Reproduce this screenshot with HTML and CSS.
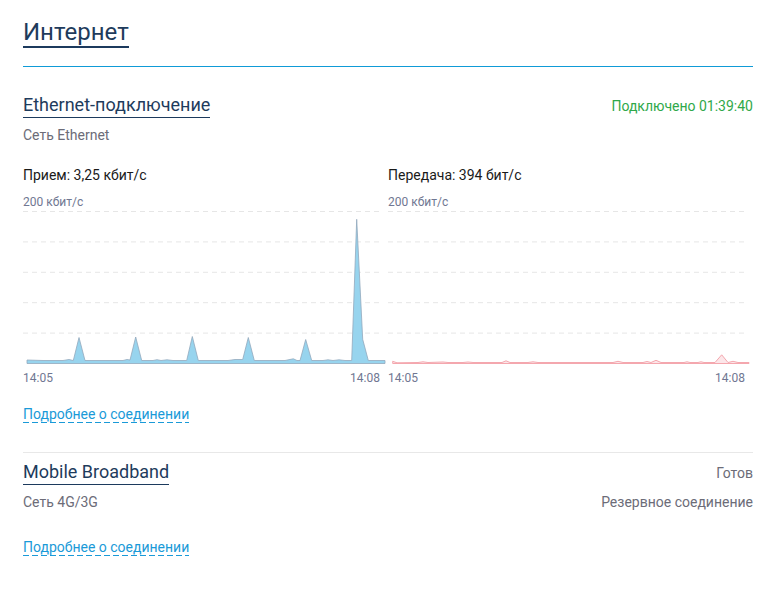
FILE: index.html
```html
<!DOCTYPE html>
<html lang="ru">
<head>
    <meta charset="UTF-8">
    <meta name="viewport" content="width=device-width, initial-scale=1.0">
    <title>Интернет</title>
    <link rel="stylesheet" href="styles.css">
</head>
<body>
    <div class="page-header">
        <h1 class="page-title">Интернет</h1>
    </div>

    <div class="connection">
        <div class="connection-head">
            <h2 class="connection-title">Ethernet-подключение</h2>
            <span class="status status-ok">Подключено 01:39:40</span>
        </div>
        <div class="connection-sub">
            <span>Сеть Ethernet</span>
        </div>

        <div class="charts">
            <div class="chart">
                <div class="chart-caption">Прием: 3,25 кбит/с</div>
                <div class="chart-scale">200 кбит/с</div>
                <svg class="chart-area" width="357" height="156" viewBox="0 0 357 156">
                    <g class="grid">
                        <line x1="0" y1="2.5" x2="357" y2="2.5"/>
                        <line x1="0" y1="32.9" x2="357" y2="32.9"/>
                        <line x1="0" y1="63.3" x2="357" y2="63.3"/>
                        <line x1="0" y1="93.7" x2="357" y2="93.7"/>
                        <line x1="0" y1="124.1" x2="357" y2="124.1"/>
                    </g>
                    <polygon class="series-rx" points="4,154.5 4,151 20,151.5 40,151.5 46,150.5 50.3,151.5 56,128.5 62,151.5 100,151.5 104,150.5 107,151 112.7,128 118.7,151.5 130,151.5 134,150.7 138,151.5 144,150.8 150,151.5 163.7,151.5 169.3,127.5 175.3,151.5 205,151.5 212,150.5 219.7,150.5 225.3,128.5 231.3,151.5 262,151.5 270.3,149.8 274,151.5 277,151.5 282.7,130.5 288.7,151.5 300,151.5 305,150.8 310,151.5 316,150.8 322,151.5 328.7,151.5 333.7,10.3 339.7,130.3 345.3,151.5 362,151.5 362,154.5"/>
                </svg>
                <div class="chart-time">
                    <span>14:05</span>
                    <span>14:08</span>
                </div>
            </div>
            <div class="chart">
                <div class="chart-caption">Передача: 394 бит/с</div>
                <div class="chart-scale">200 кбит/с</div>
                <svg class="chart-area" width="357" height="156" viewBox="0 0 357 156">
                    <g class="grid">
                        <line x1="0" y1="2.5" x2="357" y2="2.5"/>
                        <line x1="0" y1="32.9" x2="357" y2="32.9"/>
                        <line x1="0" y1="63.3" x2="357" y2="63.3"/>
                        <line x1="0" y1="93.7" x2="357" y2="93.7"/>
                        <line x1="0" y1="124.1" x2="357" y2="124.1"/>
                    </g>
                    <polygon class="series-tx" points="4.7,154.5 4.7,152.3 9,153.8 30,153.5 35,152.8 40,153.5 55,153 60,153.5 75,153.5 80,153 85,153.5 114,153.5 118,151.8 122,153.5 140,153.5 145,152.8 150,153.5 225,153.5 230,152.3 235,153.5 255,153.5 259,152.5 263,153.5 268,151.3 273,153.5 296,153.5 299,152.8 302,153.5 310,153.5 313,152.8 316,153.5 327,153.5 333.7,145.8 340,153.5 345,152.3 350,153.5 361,153.5 361,154.5"/>
                </svg>
                <div class="chart-time">
                    <span>14:05</span>
                    <span>14:08</span>
                </div>
            </div>
        </div>

        <a class="details-link" href="#">Подробнее о соединении</a>
    </div>

    <div class="connection connection-next">
        <div class="connection-head">
            <h2 class="connection-title">Mobile Broadband</h2>
            <span class="status">Готов</span>
        </div>
        <div class="connection-sub">
            <span>Сеть 4G/3G</span>
            <span>Резервное соединение</span>
        </div>

        <a class="details-link details-link-far" href="#">Подробнее о соединении</a>
    </div>
</body>
</html>
```

FILE: styles.css
```css
* {
    box-sizing: border-box;
}

body {
    margin: 0;
    padding: 18px 21px 0 23px;
    background-color: #ffffff;
    font-family: Roboto, "Noto Sans", sans-serif;
    color: #1a1a1a;
}

.page-header {
    padding-bottom: 18px;
    border-bottom: 1px solid #0f9bd7;
}

.page-title {
    display: inline-block;
    margin: 0;
    font-size: 24px;
    line-height: 28px;
    font-weight: 400;
    color: #1e3b5c;
    border-bottom: 2px solid #1c3a5d;
}

.connection {
    padding-top: 27px;
    padding-bottom: 29px;
}

.connection-next {
    padding-top: 8px;
    border-top: 1px solid #e8e8e8;
}

.connection-head {
    display: flex;
    justify-content: space-between;
    align-items: baseline;
}

.connection-title {
    display: inline-block;
    margin: 0;
    padding-bottom: 1px;
    font-size: 18px;
    line-height: 22px;
    font-weight: 400;
    color: #1e3b5c;
    border-bottom: 1px solid #1c3a5d;
}

.status {
    font-size: 14px;
    line-height: 16px;
    color: #6c6c78;
}

.status-ok {
    color: #2fa84a;
}

.connection-sub {
    display: flex;
    justify-content: space-between;
    margin-top: 9px;
    font-size: 14px;
    line-height: 16px;
    color: #6c6c78;
}

.charts {
    display: grid;
    grid-template-columns: 1fr 1fr;
    margin-top: 24px;
}

.chart {
    padding-right: 8px;
}

.chart-caption {
    font-size: 14px;
    line-height: 16px;
    color: #1a1a1a;
}

.chart-scale {
    margin-top: 12px;
    font-size: 12px;
    line-height: 14px;
    color: #707792;
}

.chart-area {
    display: block;
    overflow: visible;
}

.grid line {
    stroke: #e6e6e6;
    stroke-width: 1;
    stroke-dasharray: 5 4;
}

.series-rx {
    fill: #97d4ee;
    stroke: #93a8bd;
    stroke-width: 0.8;
    stroke-linejoin: round;
}

.series-tx {
    fill: #fce6e9;
    stroke: #f4a7ae;
    stroke-width: 1;
    stroke-linejoin: round;
}

.chart-time {
    display: flex;
    justify-content: space-between;
    margin-top: 6px;
    font-size: 12px;
    line-height: 14px;
    color: #707792;
}

.details-link {
    display: inline-block;
    margin-top: 21px;
    font-size: 14px;
    line-height: 16px;
    color: #1a9ad8;
    text-decoration: none;
    padding-bottom: 1px;
    background-image: repeating-linear-gradient(to right, #1a9ad8 0 6px, transparent 6px 9px);
    background-size: 100% 1px;
    background-position: left bottom;
    background-repeat: no-repeat;
}

.details-link-far {
    margin-top: 29px;
}
```
